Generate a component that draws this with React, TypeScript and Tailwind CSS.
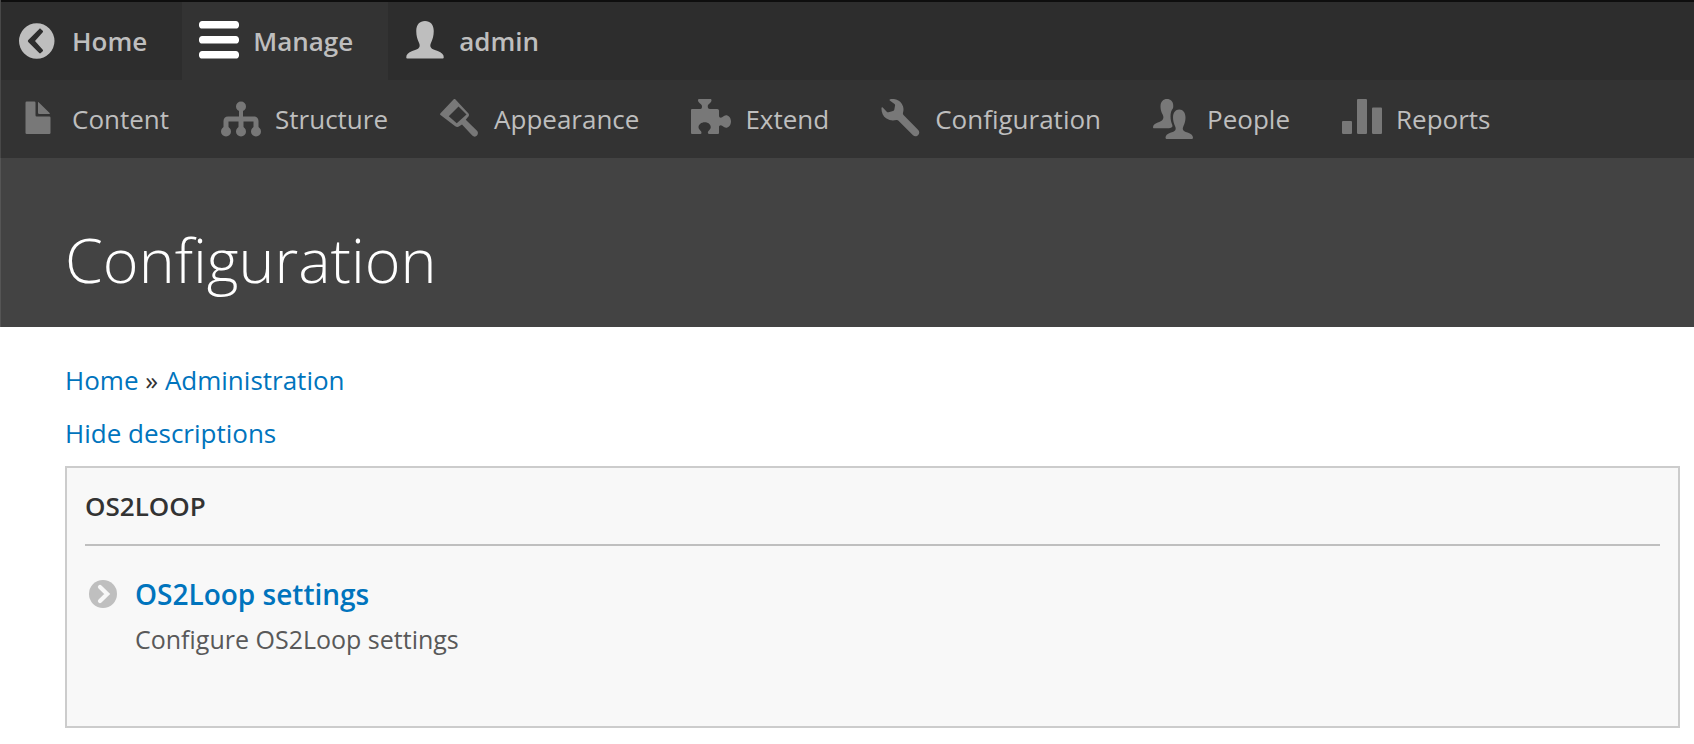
import type { ReactNode } from "react";

function Icon({ children, className = "" }: { children: ReactNode; className?: string }) {
  return (
    <svg viewBox="0 0 16 16" fill="currentColor" aria-hidden="true" className={`size-10 shrink-0 ${className}`}>
      {children}
    </svg>
  );
}

const icons = {
  back: <path fillRule="evenodd" d="M7.500.9a7.100 7.100 0 1 0 0 14.200A7.100 7.100 0 0 0 7.500.9zM9.900 11.500c.2.200.2.400 0 .6l-.8.7c-.2.200-.4.200-.6 0L4.100 8.400a.6.6 0 0 1 0-.8l4.400-4.400c.2-.2.400-.2.600 0l.8.700c.2.200.2.400 0 .6L6.800 8z" />,
  menu: <path d="M14.75 6H1.25C.56 6 0 6.56 0 7.25v.5C0 8.44.56 9 1.25 9h13.5C15.44 9 16 8.44 16 7.75v-.5C16 6.56 15.44 6 14.75 6zM14.75 0H1.25C.56 0 0 .56 0 1.25v.5C0 2.44.56 3 1.25 3h13.5C15.44 3 16 2.44 16 1.75v-.5C16 .56 15.44 0 14.75 0zM14.75 12H1.25C.56 12 0 12.56 0 13.25v.5C0 14.44.56 15 1.25 15h13.5c.69 0 1.25-.56 1.25-1.25v-.5c0-.69-.56-1.25-1.25-1.25z" />,
  user: <path d="M8 0C5.900 0 4.500 1.400 4.500 4c0 2 .5 3.400 1 4.500.4.800.5 1.500.2 2-.5.900-1.600 1.100-2.800 1.500C1.300 12.600.5 13.400.5 14.500c0 .3.200.5.500.5h14c.3 0 .5-.2.500-.5 0-1.100-.8-1.900-2.400-2.500-1.200-.4-2.300-.6-2.800-1.500-.3-.5-.2-1.200.2-2 .5-1.100 1-2.500 1-4.500C11.500 1.400 10.100 0 8 0z" />,
  content: <path d="M12.500 7h-5A.5.500 0 0 1 7 6.500v-5A.5.500 0 0 0 6.500 1h-3a.5.500 0 0 0-.5.500v12a.5.500 0 0 0 .5.500h9a.5.500 0 0 0 .5-.5v-6a.5.500 0 0 0-.5-.5zM8.500 6h4c.275 0 .34-.159.146-.354L8.355 1.354C8.160 1.159 8 1.225 8 1.500v4a.5.500 0 0 0 .5.500z" />,
  structure: (
    <>
      <circle cx="8" cy="3" r="2" />
      <circle cx="2" cy="13" r="2" />
      <circle cx="8" cy="13" r="2" />
      <circle cx="14" cy="13" r="2" />
      <path d="M7.200 4h1.600v3h4.400C14.300 7 15 7.700 15 8.800V12h-2V9H9v3H7V9H3v3H1V8.800C1 7.700 1.700 7 2.800 7h4.400z" />
    </>
  ),
  appearance: <path fillRule="evenodd" d="M5.400.2a.5.500 0 0 1 .8 0l5.200 5.600c.4.500.2 1-.3 1.500L10.300 8.300l4.500 4.400c.5.500.5 1.300 0 1.900-.5.600-1.300.6-1.900 0L8.800 10.200l-1.100.7c-.5.400-1.100.400-1.600 0L.2 6.400a.5.500 0 0 1 0-.7zM7.400 3L3.500 6.900l3.200 2.800 3.900-3.500z" />,
  extend: <path d="M2.800.5c0-.3.200-.5.500-.5h4.400c.3 0 .5.200.5.500 0 1-1.500 1.500-1.500 2.500 0 .7.400 1 .8 1h3c.4 0 .7.300.7.700v2c0 .5.300.8.700.8.800 0 1.100-1 2.100-1S16 7.500 16 9s-1 2.500-2 2.500-1.300-1-2.100-1c-.4 0-.7.300-.7.700v2.300c0 .3-.2.500-.5.500H7.300C6.700 14 6.600 13.400 6.900 12.900c.3-.4 1-.9 1-1.600 0-1.100-1-2-2.400-2s-2.500.9-2.500 2c0 .7.700 1.200 1 1.600.3.500.3 1.100-.2 1.100H.5c-.3 0-.5-.2-.5-.5v-9c0-.3.200-.5.500-.5h3.300c.4 0 .6-.4.600-1 0-1-1.600-1.500-1.600-2.500z" />,
  configuration: <path d="M3.700.1C5.400-.3 7.300.3 8.300 1.900c.7 1.100.9 2.400.5 3.600-.1.400 0 .6.200.9l5.800 5.900c.7.700.6 1.500.1 2.100s-1.500.7-2.100.1L7 8.700c-.3-.3-.5-.4-.9-.3-1.300.4-2.700.2-3.900-.6C.7 6.800.1 5.200.2 3.500c.1-.3.3-.3.500-.1l1.600 1.700c.2.200.4.300.7.200l1.800-.5c.3-.1.400-.2.500-.5l.3-1.600c.1-.3 0-.5-.2-.7L3.500.6c-.2-.2-.1-.4.2-.5z" />,
  people: (
    <>
      <path d="M6.400 11.700H.4c-.3 0-.4-.2-.4-.4 0-.9.700-1.400 1.900-1.900.8-.3 1.700-.7 2-1.200.4-.6.3-1.200 0-1.900C3.400 5.300 3 4.400 3 3 3 1 4.100 0 5.600 0c1.400 0 2.500.9 2.500 2.700 0 .4 0 .7-.1 1-.7.8-1 1.900-1 3.200 0 1.400.3 2.500.7 3.400.1.400.1.700 0 .8-.2.300-.7.500-1.300.6z" />
      <path d="M10.500 4.200c-1.500 0-2.500 1.200-2.500 3.200 0 1.500.4 2.500.8 3.400.3.700.4 1.200.1 1.700-.3.500-1.100.7-2 1-1.200.4-1.900 1.100-1.900 2 0 .2.200.5.500.5h10c.3 0 .5-.3.500-.5 0-.9-.7-1.600-1.900-2-.9-.3-1.700-.5-2-1-.3-.5-.2-1 .1-1.700.4-.9.800-1.900.8-3.400 0-2-1-3.200-2.500-3.200z" />
    </>
  ),
  reports: <path d="M.5 8.800h3c.3 0 .5.200.5.500v4.200c0 .3-.2.500-.5.500h-3a.5.500 0 0 1-.5-.5V9.300c0-.3.200-.5.500-.5zM6.500 0h3c.3 0 .5.200.5.500v13c0 .3-.2.500-.5.500h-3a.5.500 0 0 1-.5-.5V.5c0-.3.200-.5.500-.5zM12.500 3.400h3c.3 0 .5.200.5.500v9.600c0 .3-.2.500-.5.500h-3a.5.500 0 0 1-.5-.5V3.900c0-.3.200-.5.500-.5z" />,
};

const trayLinks = [
  { label: "Content", icon: icons.content },
  { label: "Structure", icon: icons.structure },
  { label: "Appearance", icon: icons.appearance },
  { label: "Extend", icon: icons.extend },
  { label: "Configuration", icon: icons.configuration },
  { label: "People", icon: icons.people },
  { label: "Reports", icon: icons.reports },
];

const tabClass = "flex items-center gap-[14px] pl-[17px] pr-[35px] font-semibold";

export default function App() {
  return (
    <div className="min-h-screen bg-white font-['Open_Sans','Noto_Sans',sans-serif] text-[#333333]">
      <div className="border-l border-[#484848] text-[26px] leading-9 text-[#bebebe]">
        <nav aria-label="Toolbar" className="flex h-20 border-t-2 border-[#0e0e0e] bg-[#2d2d2d]">
          <a href="#home" className={tabClass}>
            <Icon>{icons.back}</Icon>
            Home
          </a>
          <button type="button" aria-expanded="true" className={`${tabClass} bg-[#333333]`}>
            <Icon className="text-white">{icons.menu}</Icon>
            Manage
          </button>
          <button type="button" className={tabClass}>
            <Icon>{icons.user}</Icon>
            admin
          </button>
        </nav>
        <nav aria-label="Administration menu" className="flex h-[78px] bg-[#333333]">
          {trayLinks.map(({ label, icon }) => (
            <a key={label} href={`#${label.toLowerCase()}`} className="flex items-center gap-[14px] pl-[17px] pr-[35px]">
              <Icon className="text-[#787878]">{icon}</Icon>
              {label}
            </a>
          ))}
        </nav>
      </div>

      <header className="border-l border-[#555555] bg-[#434343] px-16 pt-[60px] pb-[25px]">
        <h1 className="text-[61px] leading-[84px] font-light text-white">Configuration</h1>
      </header>

      <main className="pt-[35px] pr-[14px] pl-[65px] text-[26px]">
        <nav aria-label="Breadcrumb" className="leading-9">
          <a href="#home" className="text-[#0074bd]">Home</a> » <a href="#administration" className="text-[#0074bd]">Administration</a>
        </nav>
        <p className="mt-[17px] leading-9">
          <a href="#hide-descriptions" className="text-[#0074bd]">Hide descriptions</a>
        </p>
        <section className="mt-[15px] border-2 border-[#cccccc] bg-[#f8f8f8] px-[18px] pb-[69px]">
          <h2 className="border-b-2 border-[#bfbfbf] pt-5 pb-5 leading-9 font-semibold uppercase">OS2Loop</h2>
          <dl className="pt-7 pl-[50px]">
            <dt className="relative text-[28px] leading-10 font-semibold">
              <svg viewBox="0 0 28 28" aria-hidden="true" className="absolute top-1.5 -left-[46px] size-7">
                <circle cx="14" cy="14" r="14" fill="#bfbfbf" />
                <path d="M11 7l7.200 7L11 21" fill="none" stroke="#f8f8f8" strokeWidth="4.200" strokeLinecap="round" />
              </svg>
              <a href="#os2loop-settings" className="text-[#0074bd]">OS2Loop settings</a>
            </dt>
            <dd className="mt-[7px] text-[25px] leading-9 text-[#595959]">Configure OS2Loop settings</dd>
          </dl>
        </section>
      </main>
    </div>
  );
}
